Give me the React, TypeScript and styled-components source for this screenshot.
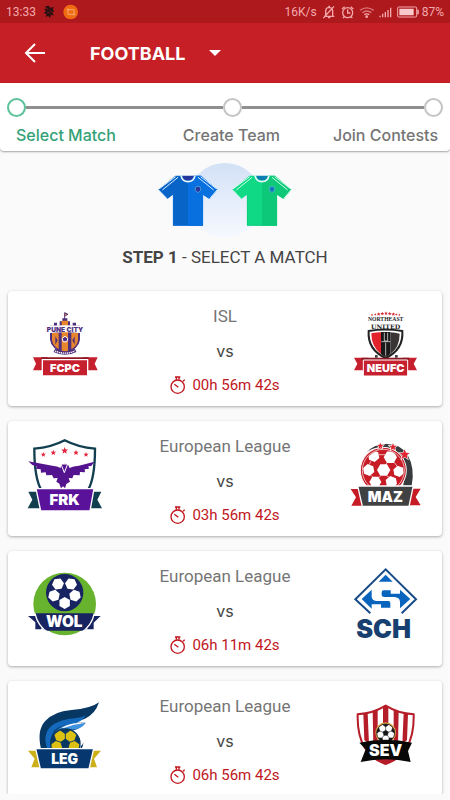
import React from 'react';
import styled, { createGlobalStyle } from 'styled-components';

const GlobalStyle = createGlobalStyle`
  * { box-sizing: border-box; }
  body { margin: 0; background: #fafafa; font-family: Roboto, "Noto Sans", sans-serif; }
`;

const Screen = styled.div`
  height: 100vh;
  display: flex;
  flex-direction: column;
  background: #fafafa;
`;

const StatusBar = styled.div`
  display: flex;
  align-items: center;
  justify-content: space-between;
  flex: none;
  height: 23px;
  padding: 0 6px;
  background: #ae191e;
  color: #f3a9ab;
  font-size: 12px;
`;

const StatusGroup = styled.div<{ $gap: number }>`
  display: flex;
  align-items: center;
  gap: ${(p) => p.$gap}px;
`;

const Header = styled.header`
  display: flex;
  align-items: center;
  flex: none;
  height: 60px;
  padding: 0 20px;
  background: #c61f25;
`;

const IconButton = styled.button`
  display: flex;
  padding: 0;
  border: 0;
  background: none;
  cursor: pointer;
`;

const SportButton = styled.button`
  display: flex;
  align-items: center;
  gap: 24px;
  margin-left: 40px;
  padding: 0;
  border: 0;
  background: none;
  color: #fff;
  font: 700 18px Inter, sans-serif;
  cursor: pointer;
`;

const Stepper = styled.nav`
  flex: none;
  padding: 15px 0 6px;
  border-radius: 0 0 4px 4px;
  background: #fff;
  box-shadow: 0 1px 2px rgba(0, 0, 0, 0.35);
  z-index: 1;
`;

const Track = styled.div`
  display: flex;
  align-items: center;
  padding: 0 7px;
`;

const Dot = styled.span<{ $active?: boolean }>`
  flex: none;
  width: 19px;
  height: 19px;
  border: 2px solid ${(p) => (p.$active ? '#5cc29a' : '#c4c4c4')};
  border-radius: 50%;
`;

const Line = styled.span<{ $grow: number }>`
  flex: ${(p) => p.$grow} 1 0;
  height: 3px;
  background: #8f8f8f;
`;

const Labels = styled.div`
  display: grid;
  grid-template-columns: auto 1fr auto;
  padding: 8px 12px 0 16px;
`;

const StepLink = styled.a<{ $active?: boolean; $middle?: boolean }>`
  padding-left: ${(p) => (p.$middle ? '14px' : '0')};
  color: ${(p) => (p.$active ? '#34a278' : '#757575')};
  font: 500 16px/20px Inter, sans-serif;
  text-align: center;
  text-decoration: none;
`;

const Content = styled.main`
  flex: 1;
  min-height: 0;
  margin-bottom: 6px;
  overflow-y: auto;
  scrollbar-width: none;
`;

const Hero = styled.section`
  display: flex;
  flex-direction: column;
  align-items: center;
  padding-top: 12px;
`;

const Title = styled.h1`
  margin: 8px 0 0;
  color: #444;
  font-size: 17px;
  font-weight: 400;
  line-height: 22px;
`;

const Strong = styled.strong`
  font-weight: 700;
`;

const MatchList = styled.ul`
  display: flex;
  flex-direction: column;
  gap: 15px;
  margin: 0;
  padding: 23px 8px 15px;
  list-style: none;
`;

const Card = styled.li`
  display: flex;
  align-items: center;
  justify-content: space-between;
  min-height: 115px;
  padding: 0 12px;
  border-radius: 4px;
  background: #fff;
  box-shadow: 0 1px 3px rgba(0, 0, 0, 0.32);
`;

const Info = styled.div`
  display: flex;
  flex-direction: column;
  align-items: center;
  gap: 12px;
  padding-top: 2px;
`;

const League = styled.span`
  color: #757575;
  font-size: 17px;
  line-height: 24px;
`;

const Versus = styled.span`
  color: #444;
  font: 400 16px/22px Inter, sans-serif;
`;

const Timer = styled.time`
  display: flex;
  align-items: center;
  gap: 6px;
  color: #c0161d;
  font-size: 15px;
  line-height: 22px;
`;

const LogoSvg = styled.svg`
  flex: none;
  width: 90px;
  height: 90px;
`;

const LogoText = styled.text`
  font-family: Inter, sans-serif;
  font-weight: 900;
  text-anchor: middle;
`;

const CrestText = styled(LogoText)`
  font-family: "Liberation Serif", serif;
  font-weight: 700;
`;

const WideCrestText = styled(LogoText)`
  font-family: "DejaVu Serif", serif;
  font-weight: 700;
`;

function points(cx: number, cy: number, r: number, sides: number, turn = -90, inner?: number) {
  const n = inner ? sides * 2 : sides;
  return Array.from({ length: n }, (_, i) => {
    const a = ((turn + (i * 360) / n) * Math.PI) / 180;
    const q = inner && i % 2 ? inner : r;
    return `${(cx + q * Math.cos(a)).toFixed(1)},${(cy + q * Math.sin(a)).toFixed(1)}`;
  }).join(' ');
}

const Star = ({ x, y, r, fill }: { x: number; y: number; r: number; fill: string }) => (
  <polygon points={points(x, y, r, 5, -90, r * 0.42)} fill={fill} />
);

function Ball({ x, y, r, base, patch, id }: { x: number; y: number; r: number; base: string; patch: string; id: string }) {
  return (
    <g>
      <clipPath id={id}><circle cx={x} cy={y} r={r} /></clipPath>
      <circle cx={x} cy={y} r={r} fill={base} stroke={patch} strokeWidth={r * 0.09} />
      <g clipPath={`url(#${id})`} fill={patch} stroke={patch} strokeWidth={r * 0.06}>
        <polygon points={points(x, y, r * 0.32, 5)} />
        {[0, 1, 2, 3, 4].map((i) => {
          const a = ((-90 + i * 72) * Math.PI) / 180;
          const px = x + Math.cos(a) * r;
          const py = y + Math.sin(a) * r;
          return (
            <g key={i}>
              <line x1={x} y1={y} x2={px} y2={py} />
              <polygon points={points(px, py, r * 0.32, 5, 90 + i * 72)} />
            </g>
          );
        })}
      </g>
    </g>
  );
}

const PuneLogo = () => (
  <LogoSvg viewBox="0 10 270 270" role="img" aria-label="FCPC">
    <path d="M134 55V36l10 5-8 4" fill="#e8862e" stroke="#50307c" strokeWidth="3" />
    <path d="M92 75h10v-9h9v9h8V62h8v-9h15v9h8v13h8v-9h10v9h12v42q-3 27-45 43-42-16-45-43V75z" fill="#50307c" />
    <path d="M96 96h20v50q-18-11-20-29zM125 60h19v92q-5 4-9 5-5-1-10-5zM154 96h20v21q-2 18-20 29z" fill="#e8862e" />
    <path d="M106 107l7 12-7 13M164 107l-7 12 7 13" fill="#50307c" />
    <polygon points={points(135, 116, 9, 5)} fill="#50307c" stroke="#fff" strokeWidth="3" />
    <path d="M103 149q32 16 64 0" fill="none" stroke="#50307c" strokeWidth="11" />
    <path d="M105 151q30 13 60 0" fill="none" stroke="#fff" strokeWidth="4" strokeDasharray="4 2" />
    <path d="M80 76q55-5 110 0l-3 22q-52-6-104 0z" fill="#fff" />
    <LogoText x="135" y="94" fontSize="20" fill="#50307c">PUNE CITY</LogoText>
    <path d="M39 170h44v39H39l9-20zM233 170h-44v39h44l-9-20z" fill="#c6202f" />
    <path d="M64 170h142v8H64z" fill="#8d1722" />
    <path d="M67 177h136v49H67z" fill="#c6202f" stroke="#fff" strokeWidth="4" />
    <LogoText x="135" y="213" fontSize="33" fill="#fff">FCPC</LogoText>
  </LogoSvg>
);

const NortheastLogo = () => (
  <LogoSvg viewBox="0 10 270 270" role="img" aria-label="NEUFC">
    {[96, 106, 116, 127, 138, 149, 160, 169, 178].map((x, i) => (
      <Star key={x} x={x} y={38 + Math.abs(i - 4) * 1.2} r={i > 1 && i < 7 ? 6 : 4} fill="#d4202a" />
    ))}
    <CrestText x="137" y="62" fontSize="17" fill="#222">NORTHEAST</CrestText>
    <WideCrestText x="137" y="84" fontSize="19" fill="#222">UNITED</WideCrestText>
    <path d="M86 91q50-9 101 0 4 56-50 81-55-25-51-81z" fill="#fff" stroke="#222" strokeWidth="6" />
    <path d="M94 98q14-3 29-3v65Q94 139 94 98z" fill="#e2232b" />
    <path d="M123 94h28v66q-7 6-14 8-7-2-14-8z" fill="#191919" />
    <path d="M151 95q15 1 28 4 0 42-28 61z" fill="#393535" />
    <path d="M133 96v25h10V96M124 123h27M137 126v39" fill="none" stroke="#fff" strokeWidth="2" />
    <path d="M42 171h43v38H42l10-20zM231 171h-43v38h43l-10-20z" fill="#c6202f" />
    <path d="M65 171h142v8H65z" fill="#8d1722" />
    <path d="M105 163h8v8h-8zM165 163h8v8h-8z" fill="#444" />
    <path d="M70 178h133v48H70z" fill="#c6202f" stroke="#fff" strokeWidth="3" />
    <LogoText x="137" y="214" fontSize="33" fill="#fff">NEUFC</LogoText>
  </LogoSvg>
);

const FrkLogo = () => (
  <LogoSvg viewBox="0 10 270 270" role="img" aria-label="FRK">
    <path d="M64 178Q43 142 43 54q52-4 91-25 40 21 91 25 0 88-21 124" fill="none" stroke="#123f50" strokeWidth="7" />
    <Star x={70} y={72} r={8} fill="#e3233c" /><Star x={100} y={66} r={9} fill="#e3233c" />
    <Star x={134} y={60} r={11} fill="#e3233c" /><Star x={168} y={66} r={9} fill="#e3233c" />
    <Star x={198} y={72} r={8} fill="#e3233c" />
    <path d="M25 92l72 13q15 1 25 7 0-13 12-13 13 0 14 13 12-6 29-7l46-12-9 13-9 1 2 7-13 2 1 9-15-1-1 10-18-1-4 10-11-1 4 11-11 7-4 13-6-6-6 6-5-14-9-6 4-11-12 1-5-10-17 1-2-9-14 1-1-10-14-2 2-7-13-4z" fill="#55148f" />
    <path d="M123 100h20l-10 26z" fill="#55148f" stroke="#fff" strokeWidth="3" />
    <path d="M25 183h39v50H23l14-26zM244 183h-39v50h41l-14-26z" fill="#123f50" />
    <path d="M48 174h174l-12 67H62z" fill="#5b129b" stroke="#fff" strokeWidth="4" />
    <LogoText x="134" y="222" fontSize="45" fill="#fff">FRK</LogoText>
  </LogoSvg>
);

const MazLogo = () => {
  const hexes = [[101, 76, 18], [151, 80, 20], [86, 118, 18], [131, 118, 20], [176, 122, 17], [106, 154, 18], [154, 154, 18]];
  return (
    <LogoSvg viewBox="0 10 270 270" role="img" aria-label="MAZ">
      <path d="M79 66q24-28 62-26 39 0 61 31 24 43 13 94h-26q13-38 0-74-20-44-67-41-25 1-43 16z" fill="#393c3e" />
      <clipPath id="maz-ball"><circle cx="130" cy="119" r="61" /></clipPath>
      <circle cx="130" cy="119" r="69" fill="#c71b25" stroke="#fff" strokeWidth="3" />
      <g clipPath="url(#maz-ball)">
        {hexes.map(([x, y, r], i) => (
          <polygon key={`${x}-${y}`} points={points(x, y, r, 6, i % 2 ? 0 : 20)} fill="#fff" />
        ))}
        <path d="M117 72h18M92 92l-4 10M141 96l-5 10M163 95l8 12M93 134l6 6M122 136l-8 6M141 136l6 4" stroke="#fff" strokeWidth="2" fill="none" />
      </g>
      <circle cx="130" cy="119" r="63" fill="none" stroke="#fff" strokeWidth="2" />
      {[[121, 46, 10], [159, 49, 12], [194, 72, 16]].map(([x, y, r]) => (
        <g key={x}><Star x={x} y={y} r={r + 5} fill="#fff" /><Star x={x} y={y} r={r} fill="#df222e" /></g>
      ))}
      <path d="M32 175h38v50H34l14-25zM242 174h-38v50h38l-15-25z" fill="#c71b25" />
      <path d="M53 166h167l-13 61H67z" fill="#3f4143" stroke="#fff" strokeWidth="4" />
      <LogoText x="136" y="213" fontSize="43" fill="#fff">MAZ</LogoText>
    </LogoSvg>
  );
};

const WolLogo = () => (
  <LogoSvg viewBox="60 73 270 270" role="img" aria-label="WOL">
    <circle cx="194" cy="193" r="94" fill="#68b32e" />
    <circle cx="194" cy="159" r="56" fill="#182461" />
    {[[174, 133], [213, 133], [225, 168], [194, 190], [162, 168]].map(([x, y], i) => (
      <polygon key={x} points={points(x, y, 18, 6, -54 + i * 72 - 72)} fill="#fff" />
    ))}
    <path d="M84 229h40v40h-18v-21zM302 229h-40v40h19v-20z" fill="#182461" />
    <path d="M105 221h178q-4 28-24 48l-8 4H137l-9-5q-19-18-23-47z" fill="#182461" />
    <path d="M105 221q8 38 40 58M283 221q-8 38-40 58" fill="none" stroke="#fff" strokeWidth="4" />
    <LogoText x="193" y="263" fontSize="46" fill="#fff">WOL</LogoText>
  </LogoSvg>
);

const SchLogo = () => (
  <LogoSvg viewBox="345 73 270 270" role="img" aria-label="SCH">
    <path d="M436 221l-45-42 91-90 91 90-43 42" fill="none" stroke="#174b87" strokeWidth="6" />
    <path d="M482 105l21 21h-42z" fill="#0864bd" />
    <path d="M410 178l30-28v22q2 12 16 12h34q6 0 6 6v14h-28v-10h-28v13z" fill="#0864bd" />
    <path d="M556 178l-31-28v12h-28v-10h-21q-6 0-6 6v8q0 6 8 6h30q16 1 17 14v20z" fill="#0864bd" />
    <LogoText x="476" y="296" fontSize="76" fill="#173f70">SCH</LogoText>
  </LogoSvg>
);

const LegLogo = () => (
  <LogoSvg viewBox="60 73 270 270" role="img" aria-label="LEG">
    <path d="M123 238q-13-55 12-83 26-30 79-34 58-4 83-23-11 35-42 49-15 7-37 9 17 5 39 3-19 22-50 25l-60 54z" fill="#073763" />
    <path d="M142 238q-18-51 20-75 23-13 61-17 23-2 35-9-14 22-42 26-48 5-58 28-10 20-5 47z" fill="#1469bd" />
    <path d="M160 193q20-27 56-31 22 0 41-2-14 20-42 20-26 0-43 17z" fill="#3e91dc" />
    <path d="M185 174q31-18 68-13-31 2-62 14z" fill="#fff" />
    <Ball id="leg-ball" x={196} y={222} r={44} base="#dcc012" patch="#073763" />
    <path d="M242 229q6-2 8-11-1 18-8 20z" fill="#073763" />
    <path d="M84 243h35v50H94l10-26zM303 243h-36v50h24l-9-26z" fill="#cbb019" />
    <path d="M107 237h174l-14 61H121z" fill="#07376f" stroke="#fff" strokeWidth="4" />
    <LogoText x="194" y="284" fontSize="42" fill="#fff">LEG</LogoText>
  </LogoSvg>
);

const SevLogo = () => (
  <LogoSvg viewBox="1020 73 270 270" role="img" aria-label="SEV">
    <path d="M1073 134q47-3 84-26 37 23 84 26 3 119-84 149-87-30-84-149z" fill="#fff" stroke="#b51d29" strokeWidth="6" />
    <path d="M1090 133l13-3 4 94-14-13zM1118 126l15-7v105h-13zM1149 112l8-4 8 4v50h-16zM1181 119l15 7-2 98h-13zM1211 130l13 3-3 78-14 13zM1115 265h85l-43 19z" fill="#b51d29" />
    <circle cx="1157" cy="189" r="31" fill="#d6a24b" />
    <Ball id="sev-ball" x={1157} y={190} r={27} base="#fff" patch="#171717" />
    <path d="M1078 219q79-18 158 0l-12 25 8 33q-75-16-150 0l15-38z" fill="#080808" />
    <LogoText x="1157" y="260" fontSize="48" fill="#fff">SEV</LogoText>
  </LogoSvg>
);

const Shirt = ({ x, left, right, trim, collar }: { x: number; left: string; right: string; trim: string; collar: string }) => (
  <g transform={`translate(${x} 0)`}>
    <path d="M52 38L73 38Q90 63 107 38L129 38 178 80 155 108 135 95V188H45V95L28 108 1 80z" fill={left} />
    <path d="M90 55Q101 51 107 38H129L178 80 155 108 135 95V188H90z" fill={right} />
    <path d="M4 77L53 41M13 81L60 43M175 77L128 41M167 81L120 43" stroke={trim} strokeWidth="3" fill="none" />
    <path d="M73 38h34q-2 14-17 14T73 38z" fill={collar} />
    <path d="M69 38q4 18 21 18t21-18" fill="none" stroke="#e6f5fb" strokeWidth="5" />
    <path d="M2 81l25 26M177 81l-22 26" stroke={trim} strokeWidth="3" />
    <path d="M112 73l8-3 8 3v9l-8 7-8-7z" fill={collar} stroke="#6bb7df" strokeWidth="2" />
    <path d="M46 95v92h88V95" fill="none" stroke={right} strokeWidth="2" />
  </g>
);

const ShirtArt = () => (
  <svg width="138" height="75" viewBox="0 0 414 225" aria-hidden="true">
    <defs>
      <linearGradient id="glow" x1="0" y1="0" x2="0" y2="1">
        <stop offset="0" stopColor="#d3e1f6" /><stop offset="1" stopColor="#f6f9ff" />
      </linearGradient>
    </defs>
    <circle cx="207" cy="112" r="112" fill="url(#glow)" />
    <Shirt x={6} left="#0964c8" right="#0870df" trim="#d9edff" collar="#25369d" />
    <Shirt x={228} left="#10d986" right="#0cc878" trim="#ccffe9" collar="#087eb5" />
  </svg>
);

const Stopwatch = () => (
  <svg width="16" height="18" viewBox="0 0 48 54" fill="none" stroke="#c0161d" strokeWidth="4" aria-hidden="true">
    <circle cx="23" cy="32" r="20" />
    <path d="M15 3h16M19 3v8M27 3v8M39 16l5-5M13 25l12 9" />
  </svg>
);

const AppIcons = () => (
  <svg width="35" height="16" viewBox="0 0 105 48" aria-hidden="true">
    <path d="M6 7l11-2 6 7 9-4-2 9 4 5-6 3 5 10-9-3-3 10-6-7-7 5 2-10-8-2 7-6-6-7 8-1z" fill="#2a1011" />
    <path d="M10 12l5 4M20 19l8 6M13 27l7-2" stroke="#9c181c" strokeWidth="2" />
    <circle cx="83" cy="24" r="22" fill="#ef6c13" />
    <path d="M71 17h22v17M75 13v18h22" fill="none" stroke="#ffc19a" strokeWidth="2" />
  </svg>
);

const SignalIcons = () => (
  <svg width="70" height="16" viewBox="0 0 210 48" fill="none" stroke="#f3a9ab" strokeWidth="4" aria-hidden="true">
    <path d="M6 37h31M11 36V22q0-11 10-12 11 1 11 12v14M18 41h7M4 42L36 7M19 7h5" />
    <circle cx="77" cy="26" r="15" />
    <path d="M77 16v11h8M60 15l8-7M94 15l-8-7M67 38l-4 4M87 38l4 4" />
    <path d="M114 19q20-15 41 0M121 26q13-10 27 0" strokeOpacity="0.65" />
    <path d="M127 32q7-5 15 0" /><circle cx="134" cy="38" r="2" fill="#f3a9ab" />
    <path d="M174 40v-5M182 40V29M190 40V24M198 40V18M206 40V11" />
  </svg>
);

const BatteryIcon = () => (
  <svg width="22" height="12" viewBox="0 0 66 36" aria-hidden="true">
    <rect x="2" y="3" width="57" height="30" rx="3" fill="none" stroke="#f3a9ab" strokeWidth="3" />
    <path d="M7 8h43v20H7zM61 11h4v14h-4z" fill="#f8c9ca" />
  </svg>
);

const matches = [
  { league: 'ISL', time: '00h 56m 42s', Home: PuneLogo, Away: NortheastLogo },
  { league: 'European League', time: '03h 56m 42s', Home: FrkLogo, Away: MazLogo },
  { league: 'European League', time: '06h 11m 42s', Home: WolLogo, Away: SchLogo },
  { league: 'European League', time: '06h 56m 42s', Home: LegLogo, Away: SevLogo },
];

export default function App() {
  return (
    <Screen>
      <GlobalStyle />
      <StatusBar>
        <StatusGroup $gap={7}><span>13:33</span><AppIcons /></StatusGroup>
        <StatusGroup $gap={5}>
          <span>16K/s</span>
          <SignalIcons />
          <StatusGroup $gap={3}><BatteryIcon />87%</StatusGroup>
        </StatusGroup>
      </StatusBar>
      <Header>
        <IconButton aria-label="Back">
          <svg width="30" height="30" viewBox="0 0 30 30" fill="none" stroke="#fff" strokeWidth="2">
            <path d="M25 15H6M15 6l-9 9 9 9" />
          </svg>
        </IconButton>
        <SportButton>
          FOOTBALL
          <svg width="12" height="6" viewBox="0 0 12 6" fill="#fff" aria-hidden="true"><path d="M0 0h12L6 6z" /></svg>
        </SportButton>
      </Header>
      <Stepper>
        <Track>
          <Dot $active /><Line $grow={13} /><Dot /><Line $grow={12} /><Dot />
        </Track>
        <Labels>
          <StepLink href="#match" $active>Select Match</StepLink>
          <StepLink href="#team" $middle>Create Team</StepLink>
          <StepLink href="#contests">Join Contests</StepLink>
        </Labels>
      </Stepper>
      <Content>
        <Hero>
          <ShirtArt />
          <Title><Strong>STEP 1</Strong> - SELECT A MATCH</Title>
        </Hero>
        <MatchList>
          {matches.map(({ league, time, Home, Away }) => (
            <Card key={time}>
              <Home />
              <Info>
                <League>{league}</League>
                <Versus>vs</Versus>
                <Timer><Stopwatch />{time}</Timer>
              </Info>
              <Away />
            </Card>
          ))}
        </MatchList>
      </Content>
    </Screen>
  );
}
